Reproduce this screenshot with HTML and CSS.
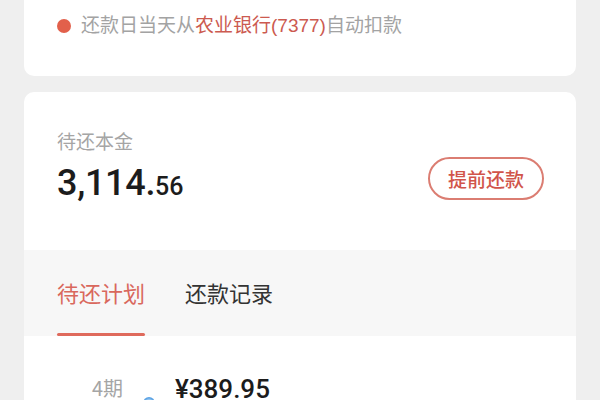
FILE: index.html
```html
<!DOCTYPE html>
<html lang="zh-CN">
<head>
<meta charset="utf-8">
<title>还款计划</title>
<link rel="stylesheet" href="styles.css">
</head>
<body>
<div class="page">
  <section class="card notice">
    <div class="notice-row">
      <span class="notice-dot"></span>
      <span class="notice-text">还款日当天从<em class="bank">农业银行(7377)</em>自动扣款</span>
    </div>
  </section>

  <section class="card main">
    <div class="summary">
      <div class="summary-left">
        <div class="label">待还本金</div>
        <div class="amount"><span class="amount-int">3,114.</span><span class="amount-dec">56</span></div>
      </div>
      <button class="prepay">提前还款</button>
    </div>

    <nav class="tabs">
      <div class="tab active">待还计划</div>
      <div class="tab">还款记录</div>
    </nav>

    <div class="plan">
      <div class="plan-row">
        <div class="period">4期</div>
        <div class="node"></div>
        <div class="plan-amount">¥389.95</div>
      </div>
    </div>
  </section>
</div>
</body>
</html>
```

FILE: styles.css
```css
html, body {
  margin: 0;
  padding: 0;
  overflow: hidden;
}

body {
  background: #efefef;
  font-family: "Liberation Sans", "Noto Sans CJK SC", sans-serif;
  color: #222;
}

.page {
  padding: 0 24px;
}

.card {
  background: #ffffff;
}

.notice {
  height: 76px;
  box-sizing: border-box;
  padding: 14px 0 0 33px;
  border-radius: 0 0 10px 10px;
}

.notice-row {
  display: flex;
  align-items: center;
  gap: 10px;
  line-height: 24px;
}

.notice-dot {
  width: 14px;
  height: 14px;
  border-radius: 50%;
  background: #e2604b;
  flex: none;
}

.notice-text {
  font-size: 19px;
  color: #a3a3a3;
}

.bank {
  font-style: normal;
  color: #cc5a50;
}

.main {
  margin-top: 16px;
  border-radius: 10px 10px 0 0;
  overflow: hidden;
}

.summary {
  height: 158px;
  box-sizing: border-box;
  padding: 39px 32px 0 33px;
  display: flex;
  justify-content: space-between;
  align-items: flex-start;
}

.label {
  font-size: 19px;
  line-height: 24px;
  color: #a5a5a5;
}

.amount {
  margin-top: 5px;
  line-height: 46px;
  color: #1c1c1c;
  font-family: "Roboto", "Liberation Sans", sans-serif;
  font-weight: 500;
}

.amount-int {
  font-size: 36px;
  letter-spacing: -0.3px;
}

.amount-dec {
  font-size: 25px;
}

.prepay {
  margin-top: 26px;
  height: 43px;
  padding: 0 18px;
  border: 2px solid #db7d72;
  border-radius: 22px;
  background: #fff;
  color: #d1544a;
  font-family: "Noto Sans CJK SC", sans-serif;
  font-weight: 500;
  font-size: 19px;
  line-height: 39px;
}

.tabs {
  height: 86px;
  box-sizing: border-box;
  background: #f7f7f7;
  display: flex;
  gap: 40px;
  padding: 0 33px;
}

.tab {
  display: flex;
  flex-direction: column;
  padding-top: 27px;
  font-family: "Noto Sans CJK SC", sans-serif;
  font-size: 22px;
  line-height: 30px;
  color: #333;
}

.tab.active {
  color: #d9685d;
}

.tab.active::after {
  content: "";
  display: block;
  height: 3px;
  margin-top: 26px;
  border-radius: 2px;
  background: #df6a5c;
}

.plan {
  background: #fff;
  height: 200px;
}

.plan-row {
  display: flex;
  align-items: flex-start;
  padding: 36px 0 0 68px;
}

.period {
  width: 51px;
  margin-top: 3px;
  font-family: "Noto Sans CJK SC", sans-serif;
  font-size: 20px;
  line-height: 26px;
  color: #a5a5a5;
}

.node {
  width: 12px;
  height: 12px;
  margin-top: 25px;
  border-radius: 50%;
  background: radial-gradient(circle, #b9dcf7 0 30%, #5aa2e4 60%);
  flex: none;
}

.plan-amount {
  margin-left: 20px;
  font-family: "Roboto", "Liberation Sans", sans-serif;
  font-weight: 500;
  font-size: 26px;
  line-height: 34px;
  color: #1c1c1c;
}
```
